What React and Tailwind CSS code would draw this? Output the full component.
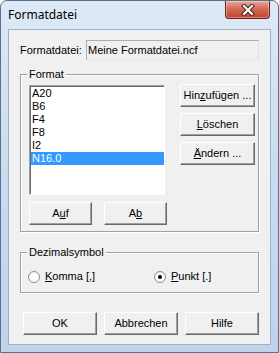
import React from 'react'

const ui = "font-['Liberation_Sans',Arial,sans-serif] text-[11px] text-black"

function Btn({ children, className = '' }) {
  return (
    <div
      className={`flex items-center justify-center bg-[#f0f0f0] border border-t-white border-l-white border-r-[#696969] border-b-[#696969] shadow-[inset_-1px_-1px_0_#a0a0a0] leading-none ${className}`}
    >
      {children}
    </div>
  )
}

function GroupBox({ label, className = '', children }) {
  return (
    <div
      className={`relative border border-[#a0a0a0] shadow-[inset_1px_1px_0_#ffffff,1px_1px_0_#ffffff] ${className}`}
    >
      <span className="absolute -top-[8px] left-[6px] bg-[#f0f0f0] px-[2px] leading-[14px]">{label}</span>
      {children}
    </div>
  )
}

function Radio({ checked }) {
  return (
    <span className="flex h-[12px] w-[12px] items-center justify-center rounded-full border border-[#8f8f8f] bg-[radial-gradient(circle_at_60%_60%,#ffffff_40%,#e6e6e6_100%)]">
      {checked && <span className="h-[4px] w-[4px] rounded-full bg-black" />}
    </span>
  )
}

export default function App() {
  const items = ['A20', 'B6', 'F4', 'F8', 'I2', 'N16.0']

  return (
    <div className={`${ui} flex h-[353px] w-[279px] flex-col rounded-t-[7px] border border-[#5d7088] bg-gradient-to-b from-[#dde9f6] via-[#c9dbf0] to-[#bfd3eb]`}>
      {/* Title bar */}
      <div className="flex h-[28px] shrink-0 items-start">
        <span className="pl-[7px] pt-[6px] font-['Noto_Sans',sans-serif] text-[12px] leading-[16px] text-black">
          Formatdatei
        </span>
        <div className="ml-auto mr-[8px] flex h-[18px] w-[45px] items-center justify-center rounded-b-[4px] border border-t-0 border-[#6b2219] bg-gradient-to-b from-[#e9a99b] via-[#d26650] to-[#c2412c] shadow-[inset_0_0_0_1px_rgba(255,255,255,0.35)]">
          <svg width="14" height="12" viewBox="0 0 14 12">
            <path d="M3 2 L11 10 M11 2 L3 10" stroke="#4a2019" strokeWidth="4.2" strokeLinecap="square" />
            <path d="M3 2 L11 10 M11 2 L3 10" stroke="#ffffff" strokeWidth="2.2" strokeLinecap="square" />
          </svg>
        </div>
      </div>

      {/* Client area */}
      <div className="mx-[7px] mb-[7px] flex flex-1 flex-col border border-[#9fb2c8] bg-[#f0f0f0]">
        <div className="mt-[10px] flex h-[20px] items-center">
          <span className="w-[77px] shrink-0 pl-[11px]">Formatdatei:</span>
          <div className="flex h-[20px] w-[173px] shrink-0 items-center border border-[#abadb3] border-b-[#e3e9ef] border-r-[#dbdfe6] bg-[#f0f0f0] pl-[1px]">
            Meine Formatdatei.ncf
          </div>
        </div>

        <GroupBox label="Format" className="ml-[11px] mt-[14px] h-[158px] w-[239px]">
          <div className="flex pl-[8px] pt-[9px]">
            <div className="flex flex-col">
              <div className="mt-[1px] h-[110px] w-[136px] border border-t-[#a0a0a0] border-l-[#a0a0a0] border-r-white border-b-white bg-white pl-[1px] pt-[1px] shadow-[inset_1px_1px_0_#696969]">
                {items.map((it) => (
                  <div
                    key={it}
                    className={`h-[13px] pl-[1px] leading-[13px] ${it === 'N16.0' ? 'bg-[#3399ff] text-white' : ''}`}
                  >
                    {it}
                  </div>
                ))}
              </div>
              <div className="mt-[7px] flex gap-[12px]">
                <Btn className="h-[23px] w-[63px]">
                  <span>A<u>u</u>f</span>
                </Btn>
                <Btn className="h-[23px] w-[63px]">
                  <span>A<u>b</u></span>
                </Btn>
              </div>
            </div>
            <div className="ml-[13px] flex flex-col gap-[6px]">
              <Btn className="h-[23px] w-[75px]">
                <span>Hin<u>z</u>ufügen ...</span>
              </Btn>
              <Btn className="h-[23px] w-[75px]">
                <span><u>L</u>öschen</span>
              </Btn>
              <Btn className="h-[23px] w-[75px]">
                <span><u>Ä</u>ndern ...</span>
              </Btn>
            </div>
          </div>
        </GroupBox>

        <GroupBox label="Dezimalsymbol" className="ml-[11px] mt-[20px] h-[41px] w-[239px]">
          <div className="flex items-center pl-[7px] pt-[17px]">
            <div className="flex w-[126px] items-center gap-[5px]">
              <Radio />
              <span className="leading-[13px]"><u>K</u>omma [,]</span>
            </div>
            <div className="flex items-center gap-[5px]">
              <Radio checked />
              <span className="leading-[13px]"><u>P</u>unkt [.]</span>
            </div>
          </div>
        </GroupBox>

        <div className="ml-[14px] mt-[19px] flex gap-[7px]">
          <Btn className="h-[23px] w-[74px]">OK</Btn>
          <Btn className="h-[23px] w-[74px]">Abbrechen</Btn>
          <Btn className="h-[23px] w-[74px]">Hilfe</Btn>
        </div>
      </div>
    </div>
  )
}
